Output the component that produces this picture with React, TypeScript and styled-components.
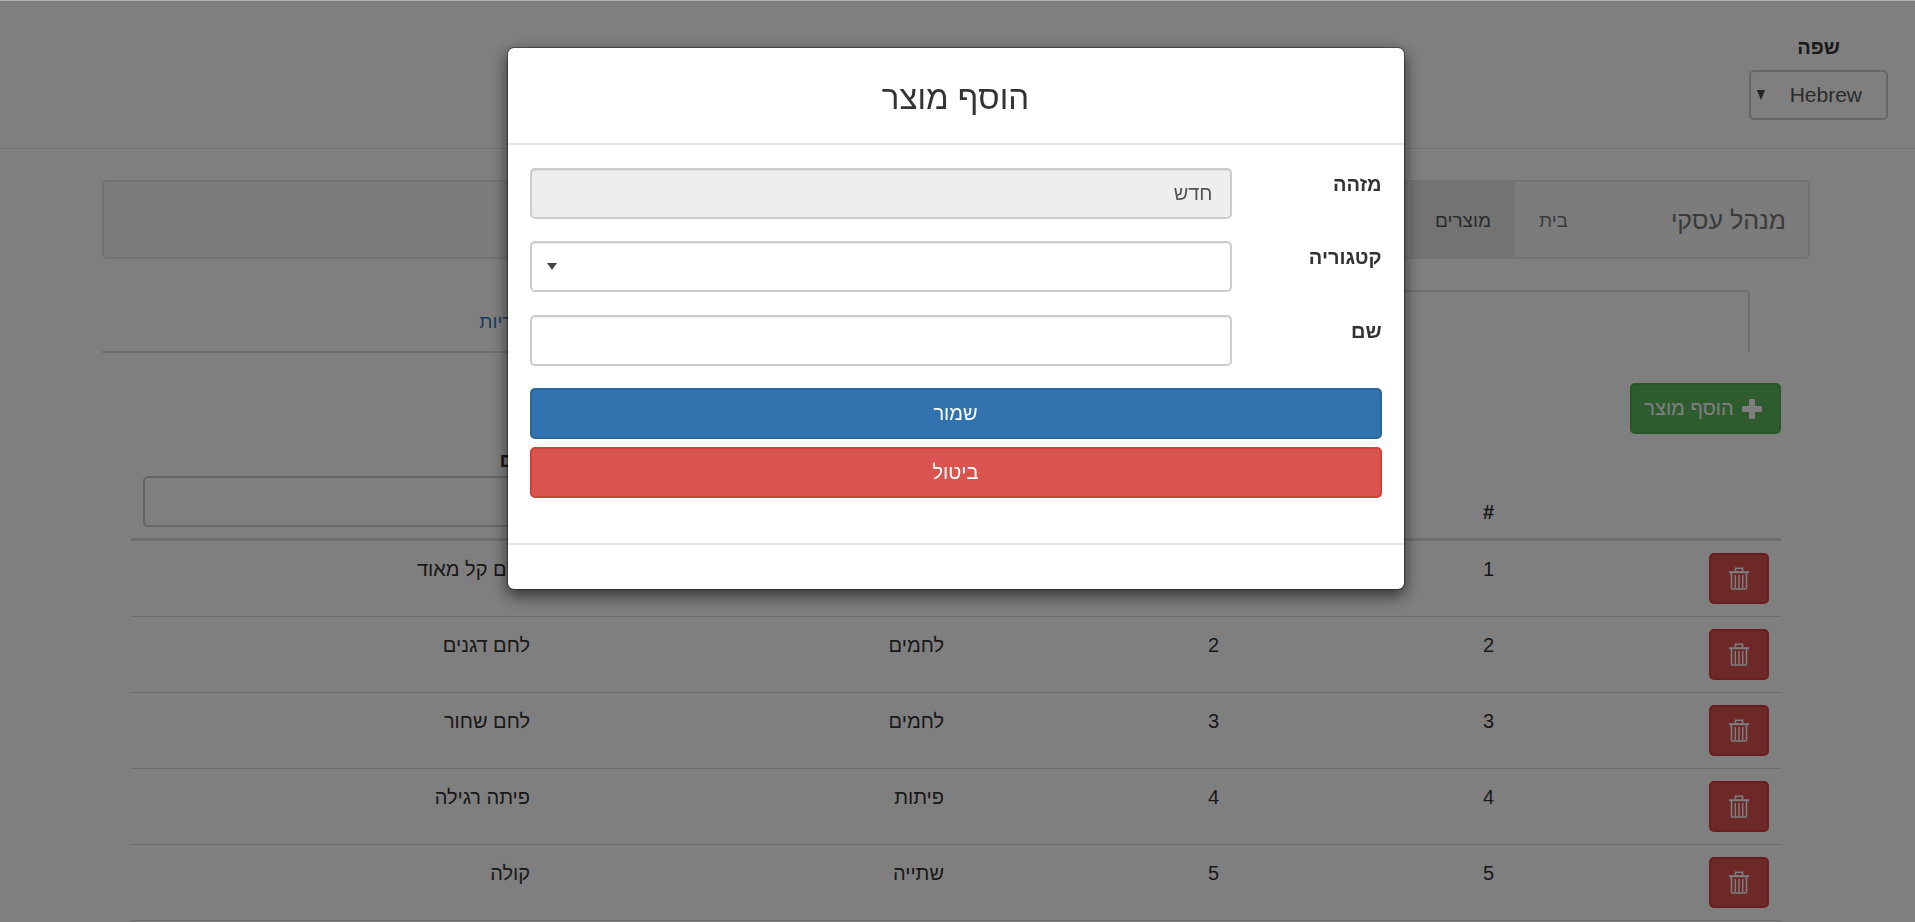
import React from "react";
import styled, { createGlobalStyle } from "styled-components";

const GlobalStyle = createGlobalStyle`
    html, body { margin: 0; padding: 0; height: 100%; overflow: hidden; background: #fff; }
    body { font-family: "Liberation Sans", Arial, sans-serif; font-size: 20px; line-height: 1.428; color: #333; direction: rtl; }
    * { box-sizing: border-box; }
`;

const Page = styled.div`
    height: 922px; overflow: hidden; border-top: 1px solid #b4b4b4;
`;
const TopBar = styled.header`
    height: 148px; border-bottom: 1px solid #e7e7e7; padding: 33px 27px 0 0;
    display: flex;
`;
const LangBlock = styled.div`
    width: 139px; display: flex; flex-direction: column; align-items: center; gap: 10px;
`;
const LangLabel = styled.label`
    font-weight: bold; font-size: 20px; line-height: 26px; color: #333;
`;
const LangSelect = styled.div`
    width: 139px; height: 50px; border: 2px solid #ccc; border-radius: 5px; background: #fff;
    display: flex; align-items: center; justify-content: space-between; padding: 0 24px 0 6px;
    color: #555; font-size: 21px;
    &::after { content: ""; order: 2; width: 0; height: 0; border-top: 10px solid #444; border-left: 4.5px solid transparent; border-right: 4.5px solid transparent; }
`;
const Content = styled.main`
    padding: 31px 105px 0 102px;
`;
const Navbar = styled.nav`
    height: 79px; background: #f8f8f8; border: 2px solid #e7e7e7; border-radius: 5px;
    display: flex; align-items: stretch; padding-right: 22px;
`;
const Brand = styled.a`
    font-size: 25px; color: #777; width: 134px; display: flex; align-items: center; white-space: nowrap;
    margin-left: 60px; padding-top: 2px;
`;
const NavItem = styled.a<{ $active?: boolean }>`
    font-size: 19px; color: ${(p) => (p.$active ? "#555" : "#777")}; background: ${(p) => (p.$active ? "#e7e7e7" : "transparent")};
    padding: 2px 24px 0; display: flex; align-items: center;
`;
const Tabs = styled.div`
    margin: 31px 60px 0 0; height: 63px; border-bottom: 2px solid #ddd;
    display: grid; grid-template-columns: 1fr 1fr;
`;
const Tab = styled.a<{ $active?: boolean }>`
    height: 63px; display: flex; align-items: center; justify-content: center; font-size: 19px;
    color: ${(p) => (p.$active ? "#555" : "#337ab7")};
    ${(p) => p.$active && "background: #fff; border: 2px solid #ddd; border-bottom-color: #fff; border-radius: 5px 5px 0 0;"}
`;
const Toolbar = styled.div`
    padding: 30px 29px 0 0; display: flex;
`;
const AddButton = styled.button`
    width: 151px; height: 51px; background: #5cb85c; border: 2px solid #4cae4c; border-radius: 5px; color: #fff;
    font: inherit; font-size: 20px; display: flex; align-items: center; justify-content: center; gap: 8px; padding: 0 5px 0 0;
`;
const Table = styled.table`
    margin: 0 29px 0 0; width: 1650px; table-layout: fixed; border-collapse: separate; border-spacing: 0;
`;
const Th = styled.th`
    padding: 12px 12px 11px; text-align: right; vertical-align: bottom; font-weight: bold; border-bottom: 3px solid #ddd; font-size: 20px; color: #333;
`;
const Td = styled.td`
    padding: 14px 12px 12px; height: 76px; text-align: right; vertical-align: top; border-bottom: 1px solid #ddd; font-size: 20px; color: #333;
`;
const ActionCell = styled(Td)`
    padding-top: 12px;
`;
const FilterInput = styled.input`
    display: block; width: 100%; height: 51px; margin-top: 1px; border: 2px solid #ccc; border-radius: 5px; background: #fff;
`;
const TrashButton = styled.button`
    width: 60px; height: 51px; background: #d9534f; border: 2px solid #d43f3a; border-radius: 5px; padding: 0;
    display: flex; align-items: center; justify-content: center; color: #fff;
`;
const Backdrop = styled.div`
    position: fixed; inset: 1px 0 0 0; background: rgba(0, 0, 0, 0.5);
`;
const ModalWrap = styled.div`
    position: fixed; inset: 0; display: flex; justify-content: center; align-items: flex-start; padding: 47px 4px 0 0;
`;
const Modal = styled.div`
    width: 898px; height: 543px; background: #fff; border: 1px solid rgba(0, 0, 0, 0.35); border-radius: 7px;
    box-shadow: 0 6px 16px rgba(0, 0, 0, 0.6); background-clip: padding-box; display: flex; flex-direction: column;
`;
const ModalHeader = styled.div`
    height: 97px; border-bottom: 2px solid #e5e5e5; display: flex; align-items: center; justify-content: center; padding-top: 6px;
`;
const ModalTitle = styled.h4`
    margin: 0; font-size: 33px; font-weight: normal; line-height: 1.1; color: #333;
`;
const ModalBody = styled.div`
    height: 400px; padding: 23px 22px 0 22px; border-bottom: 2px solid #e5e5e5;
`;
const FormRow = styled.div`
    display: grid; grid-template-columns: 150px 1fr; height: 73.4px;
`;
const FormLabel = styled.label`
    font-weight: bold; font-size: 20px; line-height: 26px; padding-top: 3px; color: #333;
`;
const Field = styled.div<{ $disabled?: boolean }>`
    height: 51px; border: 2px solid #ccc; border-radius: 5px; background: ${(p) => (p.$disabled ? "#eee" : "#fff")};
    box-shadow: inset 0 1px 1px rgba(0, 0, 0, 0.075); padding: 0 17px; display: flex; align-items: center;
    color: #555; font-size: 20px;
`;
const Caret = styled.span`
    margin-right: auto; width: 0; height: 0; border-top: 7px solid #444; border-left: 5.5px solid transparent; border-right: 5.5px solid transparent;
    position: relative; left: -2px;
`;
const ActionButton = styled.button<{ $tone: "save" | "cancel" }>`
    display: block; width: 100%; height: 51px; border-radius: 5px; color: #fff; font: inherit; font-size: 20px; padding: 0;
    background: ${(p) => (p.$tone === "save" ? "#3073ae" : "#d9534f")};
    border: 2px solid ${(p) => (p.$tone === "save" ? "#2d6596" : "#d43f3a")};
    margin-bottom: 8px;
`;

const TrashIcon = () => (
    <svg width="20" height="23" viewBox="0 0 20 23" fill="none" stroke="currentColor">
        <path d="M0 5.2h20" strokeWidth="2" />
        <path d="M6.5 4.5V1.2h7v3.3" strokeWidth="1.6" />
        <path d="M2.5 6v15a1 1 0 0 0 1 1h13a1 1 0 0 0 1-1V6" strokeWidth="1.6" />
        <path d="M6.3 8v13M10 8v13M13.7 8v13" strokeWidth="1.4" />
    </svg>
);

const PlusIcon = () => (
    <svg width="20" height="20" viewBox="0 0 20 20" fill="currentColor">
        <path d="M7 1a1 1 0 0 1 1-1h4a1 1 0 0 1 1 1v6h6a1 1 0 0 1 1 1v4a1 1 0 0 1-1 1h-6v6a1 1 0 0 1-1 1H8a1 1 0 0 1-1-1v-6H1a1 1 0 0 1-1-1V8a1 1 0 0 1 1-1h6z" />
    </svg>
);

const products = [
    { id: 1, category: "לחמים", name: "לחם קל מאוד" },
    { id: 2, category: "לחמים", name: "לחם דגנים" },
    { id: 3, category: "לחמים", name: "לחם שחור" },
    { id: 4, category: "פיתות", name: "פיתה רגילה" },
    { id: 5, category: "שתייה", name: "קולה" },
];

export default function App() {
    return (
        <>
            <GlobalStyle />
            <Page>
                <TopBar>
                    <LangBlock>
                        <LangLabel>שפה</LangLabel>
                        <LangSelect>Hebrew</LangSelect>
                    </LangBlock>
                </TopBar>
                <Content>
                    <Navbar>
                        <Brand>מנהל עסקי</Brand>
                        <NavItem>בית</NavItem>
                        <NavItem $active>מוצרים</NavItem>
                    </Navbar>
                    <Tabs>
                        <Tab $active>מוצרים</Tab>
                        <Tab>קטגוריות</Tab>
                    </Tabs>
                    <Toolbar>
                        <AddButton>
                            <PlusIcon />
                            הוסף מוצר
                        </AddButton>
                    </Toolbar>
                    <Table>
                        <colgroup>
                            <col width="275" />
                            <col width="275" />
                            <col width="275" />
                            <col width="414" />
                            <col width="411" />
                        </colgroup>
                        <thead>
                            <tr>
                                <Th />
                                <Th>#</Th>
                                <Th>מזהה</Th>
                                <Th>קטגוריה</Th>
                                <Th>
                                    שם
                                    <FilterInput />
                                </Th>
                            </tr>
                        </thead>
                        <tbody>
                            {products.map((p) => (
                                <tr key={p.id}>
                                    <ActionCell>
                                        <TrashButton>
                                            <TrashIcon />
                                        </TrashButton>
                                    </ActionCell>
                                    <Td>{p.id}</Td>
                                    <Td>{p.id}</Td>
                                    <Td>{p.category}</Td>
                                    <Td>{p.name}</Td>
                                </tr>
                            ))}
                        </tbody>
                    </Table>
                </Content>
            </Page>
            <Backdrop />
            <ModalWrap>
                <Modal>
                    <ModalHeader>
                        <ModalTitle>הוסף מוצר</ModalTitle>
                    </ModalHeader>
                    <ModalBody>
                        <FormRow>
                            <FormLabel>מזהה</FormLabel>
                            <Field $disabled>חדש</Field>
                        </FormRow>
                        <FormRow>
                            <FormLabel>קטגוריה</FormLabel>
                            <Field>
                                <Caret />
                            </Field>
                        </FormRow>
                        <FormRow>
                            <FormLabel>שם</FormLabel>
                            <Field />
                        </FormRow>
                        <ActionButton $tone="save">שמור</ActionButton>
                        <ActionButton $tone="cancel">ביטול</ActionButton>
                    </ModalBody>
                </Modal>
            </ModalWrap>
        </>
    );
}
